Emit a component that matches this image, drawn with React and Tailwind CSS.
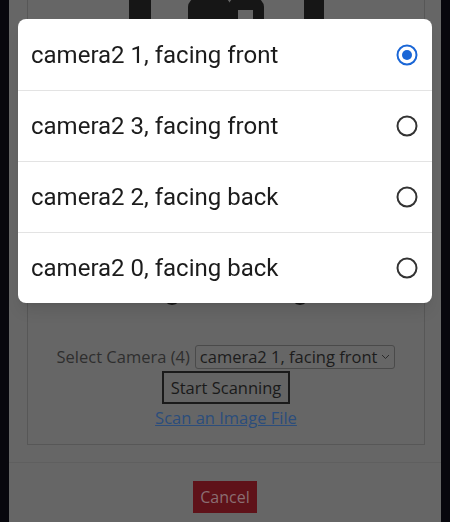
import { useState } from 'react';

const cameras = [
  'camera2 1, facing front',
  'camera2 3, facing front',
  'camera2 2, facing back',
  'camera2 0, facing back',
];

const Radio = ({ checked }) => (
  <svg width="24" height="24" viewBox="0 0 24 24">
    <circle cx="12" cy="12" r="9.5" fill="none" stroke={checked ? '#1a66d6' : '#333333'} strokeWidth="2" />
    {checked && <circle cx="12" cy="12" r="5" fill="#1a66d6" />}
  </svg>
);

// dimmed scanner illustration behind the dialog
const ScanArt = () => (
  <svg width="396" height="335" viewBox="0 0 396 335" className="block">
    <rect x="101" y="-20" width="22" height="60" fill="#161616" />
    <rect x="160" y="-2" width="43" height="60" rx="9" fill="#161616" />
    <rect x="200" y="-2" width="36" height="60" rx="9" fill="#161616" />
    <rect x="210" y="10" width="15" height="30" fill="#666666" />
    <rect x="276" y="-20" width="20" height="60" fill="#161616" />
    <circle cx="144" cy="296" r="9" fill="#161616" />
    <circle cx="272" cy="296" r="9" fill="#161616" />
  </svg>
);

export default function App() {
  const [selected, setSelected] = useState(0);

  return (
    <div className="min-h-[522px] bg-[#08070d] flex justify-center" style={{ fontFamily: '"Open Sans", Lato, sans-serif' }}>
      <div className="w-[432px] bg-[#666666] flex flex-col">
        <div className="mx-[18px] mr-[16px] border-x border-b border-[#575757] flex flex-col items-center pb-[15px]">
          <ScanArt />
          <div className="flex items-center gap-[5px] mt-[10px] text-[16.5px] leading-[20px]">
            <span className="text-[#2e2e2e]">Select Camera (4)</span>
            <div className="flex items-center gap-[4px] border border-[#4a4a4a] rounded-[3px] px-[4px] h-[24px] text-[#1c1c1c]">
              <span>{cameras[selected]}</span>
              <svg width="9" height="6" viewBox="0 0 9 6">
                <path d="M1 1l3.5 3.5L8 1" fill="none" stroke="#2a2a2a" strokeWidth="1" />
              </svg>
            </div>
          </div>
          <button className="mt-[2px] h-[33px] px-[7px] border-2 border-[#1a1a1a] bg-[#646464] text-[16.5px] leading-[20px] text-[#1a1a1a]">
            Start Scanning
          </button>
          <a className="mt-[3px] text-[16.5px] leading-[22px] text-[#2b4d7c] underline">Scan an Image File</a>
        </div>
        <div className="mt-[17px] border-t border-[#5f5f5f]" />
        <div className="flex justify-center pt-[18px]">
          <button className="w-[64px] h-[32px] bg-[#5f1219] text-[#8a6e72] text-[16px]">Cancel</button>
        </div>
      </div>

      <div className="fixed left-[18px] top-[19px] w-[414px] bg-white rounded-[8px] shadow-lg overflow-hidden" style={{ fontFamily: 'Roboto, sans-serif' }}>
        {cameras.map((c, i) => (
          <div
            key={c}
            onClick={() => setSelected(i)}
            className={`h-[71px] flex items-center justify-between pl-[13px] pr-[13px] ${i > 0 ? 'border-t border-[#e3e3e3]' : ''}`}
          >
            <span className="text-[24px] text-[#1c1c1c]">{c}</span>
            <Radio checked={i === selected} />
          </div>
        ))}
      </div>
    </div>
  );
}
